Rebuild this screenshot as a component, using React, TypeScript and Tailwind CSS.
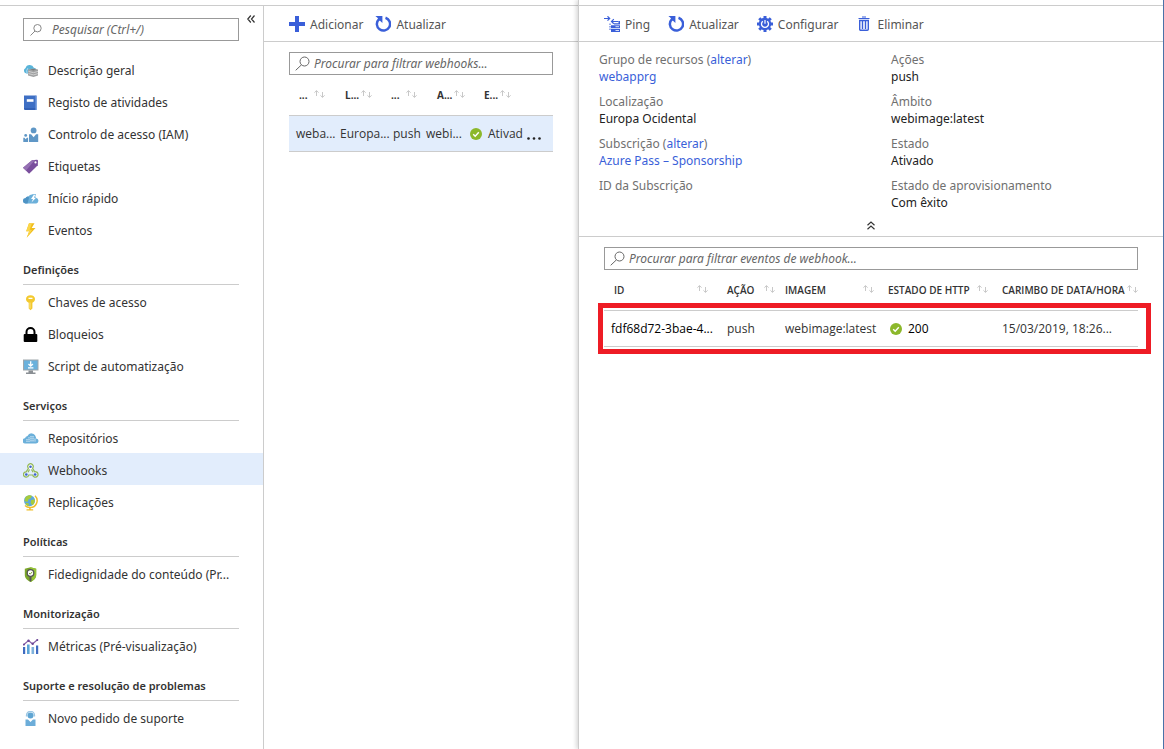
import React, { useState } from "react";

const OverviewIcon = () => (
  <svg width="16" height="16" viewBox="0 0 16 16">
    <path d="M3.400 10.500A2.900 2.900 0 0 1 2.600 5 4 4 0 0 1 6.600 2a4.200 4.200 0 0 1 4.200 2.800 2.800 2.800 0 0 1 2.600 2.200L10 10.500z" fill="#59b4d9" />
    <path d="M4.800 5.200A5 5 0 0 0 4 10" stroke="#b8d9ee" strokeWidth="1" fill="none" />
    <path d="M5 6.600l5.200-1.200L15 6.600v6L10.500 14 5 12.400z" fill="#a0a1a2" />
    <path d="M5.500 8.400l5 1.300L15 8.400M5.500 10.600l5 1.300 4.500-1.300" stroke="#dcdcdc" strokeWidth=".8" fill="none" />
    <path d="M7 6.500l3.200-.6 3 .7-2.800.8z" fill="#7a7a7a" />
  </svg>
);

const LogIcon = () => (
  <svg width="16" height="16" viewBox="0 0 16 16">
    <path d="M1 .5h12v13H1z" fill="#3e6fc4" />
    <path d="M1 13h12.500v2H2a1 1 0 0 1-1-1z" fill="#3260b5" />
    <path d="M12.500.5H14V15h-1.500z" fill="#7fa3df" />
    <path d="M3.800 4.200h6.700v2.600H3.800z" fill="#fff" />
  </svg>
);

const AccessIcon = () => (
  <svg width="16" height="16" viewBox="0 0 16 16" fill="#5f97c6">
    <circle cx="10.600" cy="3.400" r="2.900" />
    <path d="M6 7.200h2.100l2.500 3.100 2.500-3.100h2.100V15H6z" />
    <circle cx="2.700" cy="8.400" r="1.400" />
    <path d="M.3 10.800h1.200l1.200 1.500 1.200-1.500h1.200V15H.3z" />
  </svg>
);

const TagIcon = () => (
  <svg width="16" height="16" viewBox="0 0 16 16">
    <path d="M9 1.200l4.700-.4A1.200 1.200 0 0 1 15 2l-.2 4.200L6.100 14.700 0 8.700z" fill="#7a4f9d" />
    <path d="M9 1.200L0 8.700l3 2.800L12 1z" fill="#9570b3" />
    <circle cx="12.500" cy="3.400" r="1.100" fill="#fff" />
  </svg>
);

const QuickStartIcon = () => (
  <svg width="16" height="16" viewBox="0 0 16 16">
    <path d="M2.800 12.500A2.600 2.600 0 0 1 2.400 7.300 3 3 0 0 1 5.500 5.600 4 4 0 0 1 13 6.700a3 3 0 0 1 .3 5.800z" fill="#6cb0da" />
    <path d="M2.800 12.500A2.600 2.600 0 0 1 2.400 7.300 3 3 0 0 1 5.500 5.600L6 7 4.500 12.500z" fill="#4e93c4" />
    <path d="M8.500 5.500a3.500 3.500 0 0 1 4.300-1.500" stroke="#6cb0da" strokeWidth="1.500" fill="none" />
    <path d="M10.800 3.800L8 8h2l-1.500 3.500L13 6.800h-2l1.200-3z" fill="#fff" />
  </svg>
);

const EventsIcon = () => (
  <svg width="16" height="16" viewBox="0 0 16 16">
    <path d="M6 .3h5.500L8.700 5h3.800L3.700 14.700l2.500-6.500H3.200z" fill="#f0bd1c" />
    <path d="M6 .3h3L6.700 6.700 9 7l-5.300 7.700 2.500-6.500H3.200z" fill="#fbd64a" />
  </svg>
);

const KeyIcon = () => (
  <svg width="16" height="16" viewBox="0 0 16 16">
    <path d="M7.500.2c2.600 0 4.500 1.700 4.500 3.900 0 1.700-1 3-2.600 3.700v5.600l-1.900 1.900-1.800-1.900V7.800C4 7.100 3 5.800 3 4.100 3 1.900 4.900.2 7.500.2z" fill="#f3c92f" />
    <path d="M5.500 2.700h4V4h-4z" fill="#fff" />
    <path d="M7 7.500v6" stroke="#fbe489" strokeWidth="1" />
  </svg>
);

const LockIcon = () => (
  <svg width="16" height="16" viewBox="0 0 16 16">
    <path d="M3.500 8V5a4 4 0 0 1 8 0v3" fill="none" stroke="#000" strokeWidth="2" />
    <rect x=".7" y="7" width="13.600" height="8" rx="1" fill="#000" />
  </svg>
);

const ScriptIcon = () => (
  <svg width="16" height="16" viewBox="0 0 16 16">
    <path d="M0 .5h15.500v11H0z" fill="#9fa6ab" />
    <path d="M1 1.500h13.500v9H1z" fill="#6ab1dc" />
    <path d="M5.500 11.500h4.500v2h2.500v1.400H3v-1.400h2.500z" fill="#8a8f94" />
    <path d="M7.700 2.200v4.500M5.500 5l2.200 2.200L9.900 5M5 8.900h5.400" stroke="#fff" strokeWidth="1.300" fill="none" />
  </svg>
);

const RepositoryIcon = () => (
  <svg width="16" height="16" viewBox="0 0 16 16">
    <path d="M2.500 12.500A2.600 2.600 0 0 1 2 7.200 3 3 0 0 1 4.500 5 4.300 4.300 0 0 1 12.600 5.500c.4.600.5 1.300.5 2A2.500 2.500 0 0 1 13 12.500z" fill="#6bb0da" />
    <path d="M4 8v3M6 6.300V11M8 5v6M10 5v6M12 7.500V11" stroke="#d6eaf6" strokeWidth="1.100" strokeDasharray="1.300 .5" />
  </svg>
);

const WebhookIcon = () => (
  <svg width="16" height="16" viewBox="0 0 16 16" fill="none">
    <circle cx="7.500" cy="3.700" r="2.500" fill="#fff" />
    <g stroke="#93b956" strokeWidth="1.200">
      <path d="M5.400 5.200a2.700 2.700 0 1 1 4.200 0l2.100 3.600a2.700 2.700 0 1 1-2 3.200H5.800a2.700 2.700 0 1 1-2.600-3.200z" />
      <path d="M6.500 6.500L5 9.300M8.500 6.500l1.600 2.800" />
    </g>
    <g fill="#3c62d0">
      <circle cx="7.500" cy="3.700" r="1.300" />
      <circle cx="3.300" cy="11.500" r="1.300" />
      <circle cx="12.100" cy="11.500" r="1.300" />
    </g>
  </svg>
);

const GlobeIcon = () => (
  <svg width="16" height="16" viewBox="0 0 16 16">
    <path d="M12 .8a6.800 6.800 0 0 1-5 11.700 7 7 0 0 1-5-2" stroke="#efbf2a" strokeWidth="1.400" fill="none" />
    <path d="M6.200 12.500h1.500v1.700h2.500v1.300H3.500v-1.300h2.700z" fill="#efbf2a" />
    <circle cx="6.500" cy="5.700" r="5.500" fill="#5ea9dc" />
    <path d="M2.500 2.200C4.500.2 7.500-.1 9 .9L7.700 3.200l-2.200 1-.8 2.500-3.200-.5zM8 5.200l3.700-1c.5 2-.4 4.800-2.200 6L7.700 8.200zM3.500 7.700L6 8.700l-.5 2.400C4.200 10.700 3 9.700 2.500 8.700z" fill="#a6cb3c" />
  </svg>
);

const TrustIcon = () => (
  <svg width="16" height="16" viewBox="0 0 16 16">
    <path d="M7.500.2l5.700 1.600v6.300c0 3.400-2.800 5.600-5.700 7-2.900-1.400-5.700-3.600-5.700-7V1.800z" fill="#7ba62a" />
    <path d="M7.500.2l5.700 1.600v6.300c0 3.400-2.800 5.600-5.700 7z" fill="#94c335" />
    <circle cx="7.500" cy="6" r="3.300" fill="#fff" stroke="#555" strokeWidth="1.300" />
    <path d="M6.500 9.200h2v4.500l-1 1-1-1z" fill="#555" />
    <path d="M6 6l1.200 1.200 2-2.300" stroke="#7ba62a" strokeWidth="1" fill="none" />
  </svg>
);

const MetricsIcon = () => (
  <svg width="16" height="16" viewBox="0 0 16 16">
    <path d="M0 8h2.200v7H0zM13 6.500h2.200V15H13z" fill="#3f6bc0" />
    <path d="M4 5.500h2.600V15H4z" fill="#5aa4d8" />
    <path d="M8.500 8h2.600v7H8.500z" fill="#7fb2dc" />
    <path d="M.3 6L5.500 1.500l4 3.500 5.200-4.500" stroke="#8661a8" strokeWidth="1.200" fill="none" />
    <g fill="#6d4797">
      <circle cx="1" cy="5.500" r="1" />
      <circle cx="5.500" cy="1.700" r="1.200" />
      <circle cx="9.700" cy="4.700" r="1.200" />
      <circle cx="14.300" cy="1" r="1" />
    </g>
  </svg>
);

const SupportIcon = () => (
  <svg width="16" height="16" viewBox="0 0 16 16">
    <path d="M3.500 5.500V4.300a4 4 0 0 1 8 0v1.200" stroke="#9cc7e4" strokeWidth="1.300" fill="none" />
    <circle cx="7.500" cy="4.400" r="3" fill="#5fa5d3" />
    <path d="M2.500 8.500H5L7.500 11 10 8.500h2.500V15h-10z" fill="#6cadd9" />
  </svg>
);

const SearchIcon = () => (
  <svg width="16" height="16" viewBox="0 0 16 16" fill="none" stroke="#666" className="shrink-0">
    <circle cx="9.500" cy="5.500" r="4.500" />
    <path d="M6.500 8.800L.7 14.300" />
  </svg>
);

const SmallSearchIcon = () => (
  <svg width="16" height="16" viewBox="0 0 16 16" fill="none" stroke="#888" className="mr-1 shrink-0">
    <circle cx="8.500" cy="6.200" r="3.700" />
    <path d="M6 9l-4.500 4.500" />
  </svg>
);

const AddIcon = () => (
  <svg width="16" height="16" viewBox="0 0 16 16" fill="#3a5fd9">
    <path d="M6 0h4v6h6v4h-6v6H6v-6H0V6h6z" />
  </svg>
);

const RefreshIcon = () => (
  <svg width="16" height="16" viewBox="0 0 16 16">
    <path d="M10.500 1.700A6.600 6.600 0 1 1 3.800 3.300" stroke="#3a5fd9" strokeWidth="2.500" fill="none" />
    <path d="M.4 0h7v6.900L5 4.800 3 4.500 3 2.300z" fill="#3a5fd9" />
  </svg>
);

const PingIcon = () => (
  <svg width="16" height="16" viewBox="0 0 16 16" fill="#3a5fd9">
    <path d="M0 2.500h5.500M3.500.3l2.200 2.200-2.200 2.200M14.500 5.500H7.500M9.800 3.200L7.500 5.500l2.300 2.200" stroke="#3a5fd9" strokeWidth="1.200" fill="none" />
    <path d="M14.500 5H16v3.500h-6V7.200h4.500zM7 9.200h9v3H7zM7 13h9v3H7z" />
    <path d="M11.500 10.700H15M11.500 14.500H15" stroke="#fff" strokeWidth=".8" />
    <path d="M6 7.500V15" stroke="#3a5fd9" fill="none" strokeDasharray="1.500 1" />
  </svg>
);

const ConfigIcon = () => (
  <svg width="16" height="16" viewBox="0 0 16 16">
    <path d="M6.500 0h3v16h-3zM0 6.500h16v3H0zM1.200 3.300l2.100-2.100 11.500 11.500-2.100 2.100zM12.700 1.200l2.100 2.100L3.300 14.800l-2.100-2.100z" fill="#3a5fd9" />
    <circle cx="8" cy="8" r="6.200" fill="#3a5fd9" />
    <path d="M10.200 5.200A3.500 3.500 0 1 1 5.800 5.200" stroke="#fff" strokeWidth="1.300" fill="none" />
    <path d="M8 4v3.700" stroke="#fff" strokeWidth="1.200" />
  </svg>
);

const DeleteIcon = () => (
  <svg width="16" height="16" viewBox="0 0 16 16">
    <path d="M1.500 2.500h11M5 1h4" stroke="#3a5fd9" strokeWidth="1.200" />
    <path d="M2.700 4.500h8.600v8.800a1 1 0 0 1-1 1H3.700a1 1 0 0 1-1-1zM5.500 5v8M8.500 5v8" stroke="#3a5fd9" strokeWidth="1.400" fill="none" />
  </svg>
);

const SortIcon = () => (
  <svg width="11" height="8" viewBox="0 0 11 8" fill="none" stroke="#c8c8c8" className="mb-[3px] shrink-0">
    <path d="M2.500 6V.7M.4 2.700L2.500.6l2.100 2.100M8.500 2v5.300M6.400 5.300l2.100 2.100 2.100-2.100" />
  </svg>
);

const CheckIcon = () => (
  <svg width="12" height="12" viewBox="0 0 12 12" className="shrink-0">
    <circle cx="6" cy="6" r="6" fill="#8cb82b" />
    <path d="M3.200 6.200l2 2 3.600-4" stroke="#fff" strokeWidth="1.400" fill="none" />
  </svg>
);

const menu = [
  {
    title: "",
    items: [
      { label: "Descrição geral", icon: <OverviewIcon /> },
      { label: "Registo de atividades", icon: <LogIcon /> },
      { label: "Controlo de acesso (IAM)", icon: <AccessIcon /> },
      { label: "Etiquetas", icon: <TagIcon /> },
      { label: "Início rápido", icon: <QuickStartIcon /> },
      { label: "Eventos", icon: <EventsIcon /> },
    ],
  },
  {
    title: "Definições",
    items: [
      { label: "Chaves de acesso", icon: <KeyIcon /> },
      { label: "Bloqueios", icon: <LockIcon /> },
      { label: "Script de automatização", icon: <ScriptIcon /> },
    ],
  },
  {
    title: "Serviços",
    items: [
      { label: "Repositórios", icon: <RepositoryIcon /> },
      { label: "Webhooks", icon: <WebhookIcon /> },
      { label: "Replicações", icon: <GlobeIcon /> },
    ],
  },
  {
    title: "Políticas",
    items: [{ label: "Fidedignidade do conteúdo (Pr...", icon: <TrustIcon /> }],
  },
  {
    title: "Monitorização",
    items: [{ label: "Métricas (Pré-visualização)", icon: <MetricsIcon /> }],
  },
  {
    title: "Suporte e resolução de problemas",
    items: [{ label: "Novo pedido de suporte", icon: <SupportIcon /> }],
  },
];

const SearchBox = ({
  placeholder,
  icon = <SearchIcon />,
}: {
  placeholder: string;
  icon?: React.ReactNode;
}) => {
  const [value, setValue] = useState("");
  return (
    <label className="flex h-[23px] items-center gap-[3px] border border-[#999] bg-white pl-[5px]">
      {icon}
      <input
        type="text"
        value={value}
        aria-label={placeholder}
        placeholder={placeholder}
        className="w-full min-w-0 italic leading-4 placeholder:text-[#666] focus:outline-none"
        onChange={(e) => setValue(e.target.value)}
      />
    </label>
  );
};

const ToolButton = ({
  icon,
  label,
}: {
  icon: React.ReactNode;
  label: string;
}) => (
  <button className="flex cursor-pointer items-center gap-[5px] text-[#555]">
    {icon}
    <span className="pt-0.5">{label}</span>
  </button>
);

const Sidebar = () => {
  const [active, setActive] = useState("Webhooks");
  return (
    <nav className="w-[264px] shrink-0 border-r border-[#ccc]">
      <div className="flex items-start gap-2 pt-3 pl-[23px]">
        <div className="w-[216px]">
          <SearchBox placeholder="Pesquisar (Ctrl+/)" icon={<SmallSearchIcon />} />
        </div>
        <button aria-label="Recolher menu" className="-mt-[3px] cursor-pointer">
          <svg width="8" height="8" viewBox="0 0 8 8" fill="none" stroke="#333" strokeWidth="1.200">
            <path d="M3.800.5L.8 4l3 3.500M7.500.5l-3 3.500 3 3.500" />
          </svg>
        </button>
      </div>
      <div className="pt-3">
        {menu.map((group) => (
          <div key={group.title}>
            {group.title && (
              <h2 className="mr-6 ml-[23px] border-b border-[#ccc] pt-[17px] pb-[6px] text-[11px] leading-4 font-semibold">
                {group.title}
              </h2>
            )}
            <ul>
              {group.items.map((item) => (
                <li key={item.label}>
                  <a
                    href="#"
                    className={
                      active === item.label
                        ? "flex h-8 items-center gap-[9px] bg-[#e2edfc] pt-[3px] pl-[23px] whitespace-nowrap"
                        : "flex h-8 items-center gap-[9px] pt-[3px] pl-[23px] whitespace-nowrap"
                    }
                    onClick={() => setActive(item.label)}
                  >
                    {item.icon}
                    {item.label}
                  </a>
                </li>
              ))}
            </ul>
          </div>
        ))}
      </div>
    </nav>
  );
};

const WebhookList = () => (
  <section className="w-[314px] shrink-0">
    <div className="flex h-9 items-center gap-3 border-b border-[#ccc] pl-[25px]">
      <ToolButton icon={<AddIcon />} label="Adicionar" />
      <ToolButton icon={<RefreshIcon />} label="Atualizar" />
    </div>
    <div className="pt-[10px] pr-[25px] pl-[25px]">
      <SearchBox placeholder="Procurar para filtrar webhooks..." />
      <table className="w-full table-fixed text-left font-['Open_Sans',sans-serif] whitespace-nowrap">
        <colgroup>
          <col className="w-[46px]" />
          <col className="w-[49px]" />
          <col className="w-[42px]" />
          <col className="w-[42px]" />
          <col />
        </colgroup>
        <thead>
          <tr className="h-10 text-[10px]">
            <th className="pt-0.5 pl-[10px]">
              <span className="flex items-center gap-[6px]">... <SortIcon /></span>
            </th>
            <th className="pt-0.5 pl-[10px]">
              <span className="flex items-center gap-0.5">L... <SortIcon /></span>
            </th>
            <th className="pt-0.5 pl-[7px]">
              <span className="flex items-center gap-[6px]">... <SortIcon /></span>
            </th>
            <th className="pt-0.5 pl-[11px]">
              <span className="flex items-center gap-0.5">A... <SortIcon /></span>
            </th>
            <th className="pt-0.5 pl-4">
              <span className="flex items-center gap-0.5">E... <SortIcon /></span>
            </th>
          </tr>
        </thead>
        <tbody>
          <tr className="h-9 border-y border-[#ccc] bg-[#e2edfc]">
            <td className="pt-0.5 pl-[7px]">weba...</td>
            <td className="pt-0.5 pl-[5px]">Europa...</td>
            <td className="pt-0.5 pl-[9px]">push</td>
            <td className="pt-0.5">webi...</td>
            <td className="pt-0.5 pl-[2px]">
              <div className="flex items-center justify-between pr-[11px]">
                <span className="flex items-center gap-[6px]">
                  <CheckIcon />
                  Ativad
                </span>
                <button aria-label="Mais" className="cursor-pointer">
                  <svg width="16" height="12" viewBox="0 0 16 12" fill="#222">
                    <circle cx="2.500" cy="10.500" r="1.300" />
                    <circle cx="8" cy="10.500" r="1.300" />
                    <circle cx="13.500" cy="10.500" r="1.300" />
                  </svg>
                </button>
              </div>
            </td>
          </tr>
        </tbody>
      </table>
    </div>
  </section>
);

const Change = () => (
  <>
    (<a href="#" className="text-[#3a5fd9]">alterar</a>)
  </>
);

const Essentials = () => (
  <div className="border-b border-[#ccc] pt-[9px] pb-[6px]">
    <div className="grid grid-cols-2 pl-5 leading-[17px] text-[#222]">
      <dl className="flex flex-col gap-2">
        <div>
          <dt className="text-[#707070]">Grupo de recursos <Change /></dt>
          <dd><a href="#" className="text-[#3a5fd9]">webapprg</a></dd>
        </div>
        <div>
          <dt className="text-[#707070]">Localização</dt>
          <dd>Europa Ocidental</dd>
        </div>
        <div>
          <dt className="text-[#707070]">Subscrição <Change /></dt>
          <dd><a href="#" className="text-[#3a5fd9]">Azure Pass – Sponsorship</a></dd>
        </div>
        <div>
          <dt className="text-[#707070]">ID da Subscrição</dt>
        </div>
      </dl>
      <dl className="flex flex-col gap-2 pl-[10px]">
        <div>
          <dt className="text-[#707070]">Ações</dt>
          <dd>push</dd>
        </div>
        <div>
          <dt className="text-[#707070]">Âmbito</dt>
          <dd>webimage:latest</dd>
        </div>
        <div>
          <dt className="text-[#707070]">Estado</dt>
          <dd>Ativado</dd>
        </div>
        <div>
          <dt className="text-[#707070]">Estado de aprovisionamento</dt>
          <dd>Com êxito</dd>
        </div>
      </dl>
    </div>
    <button aria-label="Recolher" className="mx-auto mt-[10px] block cursor-pointer">
      <svg width="8" height="9" viewBox="0 0 8 9" fill="none" stroke="#333" strokeWidth="1.200">
        <path d="M.5 4.200L4 1l3.500 3.200M.5 8.200L4 5l3.500 3.200" />
      </svg>
    </button>
  </div>
);

const EventsTable = () => (
  <div className="relative">
    <table className="w-full table-fixed text-left font-['Open_Sans',sans-serif] whitespace-nowrap">
      <colgroup>
        <col />
        <col className="w-[58px]" />
        <col className="w-[103px]" />
        <col className="w-[114px]" />
        <col className="w-[146px]" />
      </colgroup>
      <thead>
        <tr className="h-10 text-[10px]">
          <th className="pt-0.5 pr-[9px] pl-[10px] font-semibold">
            <span className="flex items-center justify-between">ID <SortIcon /></span>
          </th>
          <th className="pt-0.5 pl-[10px] font-semibold">
            <span className="flex items-center justify-between">AÇÃO <SortIcon /></span>
          </th>
          <th className="pt-0.5 pr-1 pl-[10px] font-semibold">
            <span className="flex items-center justify-between">IMAGEM <SortIcon /></span>
          </th>
          <th className="pt-0.5 pr-1 pl-[10px] font-semibold">
            <span className="flex items-center justify-between">ESTADO DE HTTP <SortIcon /></span>
          </th>
          <th className="pt-0.5 pl-[10px] font-semibold">
            <span className="flex items-center justify-between">CARIMBO DE DATA/HORA <SortIcon /></span>
          </th>
        </tr>
      </thead>
      <tbody>
        <tr className="h-9 border-y border-[#ccc]">
          <td className="pt-0.5 pl-[7px] text-black">fdf68d72-3bae-4...</td>
          <td className="pt-0.5 pl-[10px]">push</td>
          <td className="pt-0.5 pl-[10px]">webimage:latest</td>
          <td className="pt-0.5 pl-3">
            <span className="flex items-center gap-[6px] text-black">
              <CheckIcon />
              200
            </span>
          </td>
          <td className="pt-0.5 pl-[10px]">15/03/2019, 18:26...</td>
        </tr>
      </tbody>
    </table>
    {/* highlight around the latest event */}
    <div className="pointer-events-none absolute -right-[13px] -bottom-[7px] -left-[6px] h-[51px] border-5 border-[#ee1c25]" />
  </div>
);

const WebhookDetails = () => (
  <section className="min-w-0 flex-1">
    <div className="flex h-9 items-center gap-[18px] border-b border-[#ccc] pl-[25px]">
      <ToolButton icon={<PingIcon />} label="Ping" />
      <ToolButton icon={<RefreshIcon />} label="Atualizar" />
      <ToolButton icon={<ConfigIcon />} label="Configurar" />
      <ToolButton icon={<DeleteIcon />} label="Eliminar" />
    </div>
    <Essentials />
    <div className="pt-[10px] pr-[25px] pl-[25px]">
      <SearchBox placeholder="Procurar para filtrar eventos de webhook..." />
      <EventsTable />
    </div>
  </section>
);

const App = () => {
  return (
    <div className="flex min-h-screen bg-white font-['Noto_Sans',sans-serif] text-[12px] text-[#333]">
      <div className="flex shrink-0 pt-[5px]">
        <div className="flex border-t border-[#ccc]">
          <Sidebar />
          <WebhookList />
        </div>
      </div>
      <main className="flex min-w-0 flex-1 border-r border-l border-r-[#4a72a8] border-l-[#ccc] pt-[5px] shadow-[-2px_0_4px_rgba(0,0,0,0.15)]">
        <div className="flex min-w-0 flex-1 border-t border-[#ccc]">
          <WebhookDetails />
        </div>
      </main>
    </div>
  );
};

export default App;
